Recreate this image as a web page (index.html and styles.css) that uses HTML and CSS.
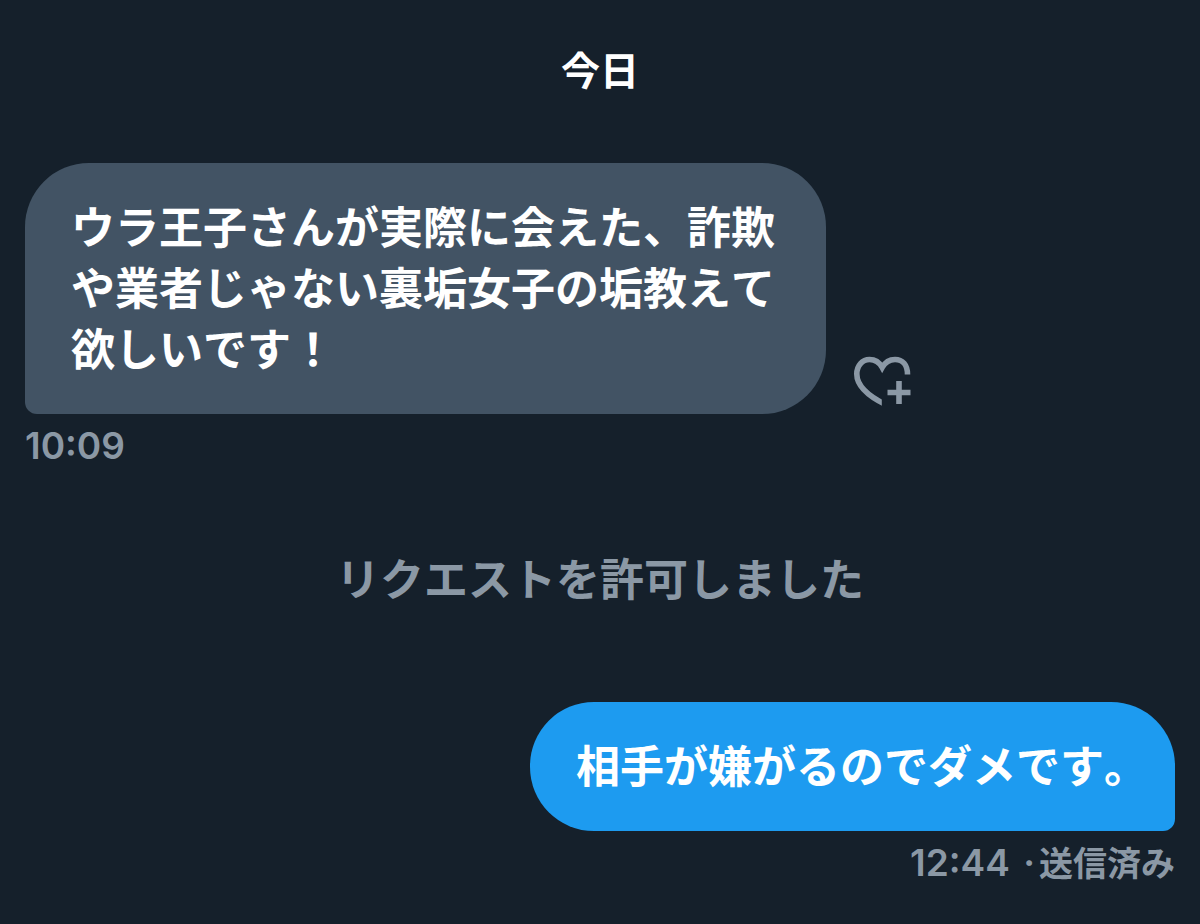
FILE: index.html
```
<!doctype html>
<html lang="ja">
  <head>
    <meta charset="UTF-8" />
    <meta name="viewport" content="width=device-width, initial-scale=1.0" />
    <title>メッセージ</title>
    <link rel="stylesheet" href="styles.css">
  </head>
  <body>
    <main class="thread">
      <h1 class="day">今日</h1>

      <div class="message received">
        <div class="message-row">
          <p class="bubble">ウラ王子さんが実際に会えた、詐欺や業者じゃない裏垢女子の垢教えて欲しいです！</p>
          <button type="button" class="react" aria-label="リアクションを追加">
            <svg width="58" height="52" viewBox="0 0 58 52" fill="none" stroke="currentColor">
              <clipPath id="heart">
                <path d="M0 0H58V30H27.800V52H0Z" />
              </clipPath>
              <path clip-path="url(#heart)" d="M32 48.800C13 39.500 2.800 29.500 2.800 18 2.800 9.500 8.500 3.500 15.500 3.500 21.500 3.500 25.500 6.500 28.200 11.500 31 6.500 35 3.500 41 3.500 48.500 3.500 53.500 9 53.500 18.500" stroke-width="5.600" />
              <path d="M45 25V48M33.500 36.500H56.500" stroke-width="5.600" />
            </svg>
          </button>
        </div>
        <div class="meta"><time>10:09</time></div>
      </div>

      <p class="notice">リクエストを許可しました</p>

      <div class="message sent">
        <div class="message-row">
          <p class="bubble">相手が嫌がるのでダメです。</p>
        </div>
        <div class="meta"><time>12:44</time> <span class="dot">·</span><span class="status">送信済み</span></div>
      </div>
    </main>
  </body>
</html>
```

FILE: styles.css
```
* {
  box-sizing: border-box;
}

body {
  margin: 0;
  background-color: #15202b;
  color: #fff;
  font-family: Inter, "Noto Sans CJK JP", sans-serif;
  font-size: 44px;
  font-weight: 700;
  line-height: 61px;
}

h1,
p {
  margin: 0;
}

.thread {
  display: flex;
  flex-direction: column;
  padding: 40px 25px;
}

.day {
  margin-bottom: 62px;
  font-size: 39px;
  font-weight: 700;
  text-align: center;
}

.message {
  display: flex;
  flex-direction: column;
}

.message-row {
  display: flex;
  align-items: flex-end;
  gap: 28px;
}

.bubble {
  max-width: 801px;
  padding: 35px 46px 33px;
  border-radius: 64px;
  font-kerning: none;
}

.received .bubble {
  border-bottom-left-radius: 12px;
  background-color: #425364;
}

.sent {
  align-items: flex-end;
}

.sent .bubble {
  padding-right: 27px;
  border-bottom-right-radius: 12px;
  background-color: #1d9bf0;
}

.react {
  flex: none;
  padding: 0;
  border: 0;
  margin-bottom: 6px;
  background: none;
  color: #8b98a5;
  cursor: pointer;
}

.react svg {
  display: block;
}

.meta {
  margin-top: 8px;
  color: #8b98a5;
  font-size: 37px;
  font-weight: 600;
  line-height: 48px;
}

.dot {
  margin: 0 4px;
}

.status {
  font-size: 34px;
}

.notice {
  margin: 80px 0 91px;
  color: #8b98a5;
  text-align: center;
}
```
